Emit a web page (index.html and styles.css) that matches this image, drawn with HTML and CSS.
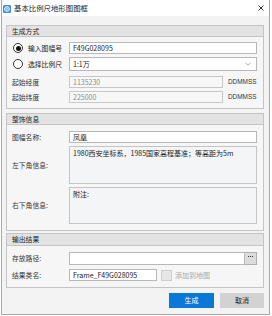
FILE: index.html
```html
<!DOCTYPE html>
<html lang="zh">
<head>
<meta charset="utf-8">
<title>基本比例尺地形图图框</title>
<link rel="stylesheet" href="styles.css">
</head>
<body>
<div class="win">
  <div class="titlebar">
    <svg class="appicon" width="8" height="8" viewBox="0 0 8 8">
      <rect x="0" y="0" width="8" height="8" rx="1.5" fill="#3b8fd9"/>
      <circle cx="4" cy="4" r="2.4" fill="none" stroke="#fff" stroke-width="0.9"/>
      <path d="M1.6 4h4.8M4 1.6v4.8" stroke="#fff" stroke-width="0.6"/>
    </svg>
    <span class="title">基本比例尺地形图图框</span>
    <svg class="close" width="6" height="6" viewBox="0 0 6 6">
      <path d="M0.5 0.5L5.5 5.5M5.5 0.5L0.5 5.5" stroke="#333" stroke-width="1"/>
    </svg>
  </div>
  <div class="content">
    <section class="group g1">
      <div class="ghead">生成方式</div>
      <div class="gbody">
        <div class="row r1">
          <div class="radio-label"><span class="radio checked"></span>输入图幅号</div>
          <div class="field">F49G028095</div>
        </div>
        <div class="row r2">
          <div class="radio-label"><span class="radio"></span>选择比例尺</div>
          <div class="field select">
            <span>1:1万</span>
            <svg class="chev" width="6" height="4" viewBox="0 0 6 4"><path d="M0.5 0.8L3 3.2L5.5 0.8" fill="none" stroke="#999" stroke-width="0.8"/></svg>
          </div>
        </div>
        <div class="row r3">
          <div class="label">起始经度</div>
          <div class="unit-row">
            <div class="field disabled short">1135230</div>
            <span class="unit">DDMMSS</span>
          </div>
        </div>
        <div class="row r4">
          <div class="label">起始纬度</div>
          <div class="unit-row">
            <div class="field disabled short">225000</div>
            <span class="unit">DDMMSS</span>
          </div>
        </div>
      </div>
    </section>

    <section class="group g2">
      <div class="ghead">整饰信息</div>
      <div class="gbody">
        <div class="row r5">
          <div class="label">图幅名称:</div>
          <div class="field">凤凰</div>
        </div>
        <div class="row r6">
          <div class="label">左下角信息:</div>
          <div class="area">1980西安坐标系，1985国家高程基准；等高距为5m</div>
        </div>
        <div class="row r7">
          <div class="label">右下角信息:</div>
          <div class="area a2">附注:</div>
        </div>
      </div>
    </section>

    <section class="group g3">
      <div class="ghead">输出结果</div>
      <div class="gbody">
        <div class="row r8">
          <div class="label">存放路径:</div>
          <div class="path-row">
            <div class="field path"></div>
            <div class="browse"><span class="dots"></span></div>
          </div>
        </div>
        <div class="row r9">
          <div class="label">结果类名:</div>
          <div class="name-row">
            <div class="field name">Frame_F49G028095</div>
            <span class="check"></span>
            <span class="check-label">添加到地图</span>
          </div>
        </div>
      </div>
    </section>

    <div class="buttons">
      <div class="btn primary">生成</div>
      <div class="btn cancel">取消</div>
    </div>
  </div>
</div>
</body>
</html>
```

FILE: styles.css
```css
* { box-sizing: border-box; }

html, body {
  margin: 0;
  padding: 0;
}

body {
  width: 272px;
  height: 316px;
  background: #ffffff;
  font-family: "Noto Sans CJK SC", "Noto Sans", sans-serif;
  font-size: 7px;
  line-height: 1;
  color: #2a2a2a;
  overflow: hidden;
}

.win {
  margin-left: 1px;
  width: 269px;
  height: 315px;
  border-left: 1px solid #a8a8a8;
  border-right: 1px solid #a8a8a8;
  border-bottom: 1px solid #a8a8a8;
  background: #f3f3f3;
  display: flex;
  flex-direction: column;
}

.titlebar {
  height: 16px;
  background: #ffffff;
  display: flex;
  align-items: center;
  padding-left: 1px;
  padding-right: 5px;
}

.appicon {
  display: block;
  margin-top: 1px;
}

.title {
  margin-left: 3px;
  font-size: 7.4px;
  color: #222;
}

.close {
  display: block;
  margin-left: auto;
  margin-top: -1px;
}

.content {
  flex: 1;
  padding: 9px 5px 0 4px;
  display: flex;
  flex-direction: column;
}

.group {
  border: 1px solid #c4c4c4;
  background: #f6f6f6;
}

.g2 { margin-top: 4px; }
.g3 { margin-top: 2px; }

.ghead {
  height: 11px;
  background: #e3e3e3;
  border-bottom: 1px solid #c4c4c4;
  padding-left: 5px;
  display: flex;
  align-items: center;
  font-size: 6.8px;
  color: #222;
}

.g3 .ghead { height: 12px; }

.gbody {
  padding: 5px 6px 5px 5px;
  display: flex;
  flex-direction: column;
}

.g2 .gbody { padding-top: 6px; padding-bottom: 6px; }
.g3 .gbody { padding-top: 6px; padding-bottom: 6px; }

.row {
  display: grid;
  grid-template-columns: 57px 188px;
  align-items: center;
}

.r2 { margin-top: 3px; }
.r3 { margin-top: 5px; }
.r4 { margin-top: 3px; }
.r6 { margin-top: 3px; }
.r7 { margin-top: 3px; }
.r9 { margin-top: 4px; }

.label {
  color: #333;
  font-size: 6.8px;
}

.radio-label {
  display: flex;
  align-items: center;
  color: #222;
  font-size: 6.8px;
}

.radio {
  width: 10px;
  height: 10px;
  margin-left: 1px;
  margin-right: 5px;
  border: 1px solid #333;
  border-radius: 50%;
  background: #fff;
  display: flex;
  align-items: center;
  justify-content: center;
}

.radio.checked::after {
  content: "";
  width: 5px;
  height: 5px;
  border-radius: 50%;
  background: #111;
}

.field {
  height: 12px;
  background: #ffffff;
  border: 1px solid #b8b8b8;
  padding-left: 3px;
  display: flex;
  align-items: center;
  color: #222;
  font-size: 7px;
  white-space: nowrap;
  overflow: hidden;
}

.select {
  height: 14px;
  justify-content: space-between;
  padding-right: 5px;
}

.chev { display: block; }

.unit-row,
.path-row,
.name-row {
  display: flex;
  align-items: center;
}

.short {
  width: 154px;
}

.disabled {
  background: #f7f7f7;
  border-color: #c8c8c8;
  color: #8c8c8c;
}

.unit {
  margin-left: 5px;
  font-size: 6.4px;
  color: #333;
  font-family: "Liberation Sans", "Noto Sans", sans-serif;
}

.area {
  height: 38px;
  background: #f4f5f7;
  border: 1px solid #c4c4c4;
  padding: 3px 3px;
  color: #222;
  font-size: 7px;
  white-space: nowrap;
  overflow: hidden;
}

.a2 { height: 37px; }

.path {
  width: 176px;
  height: 13px;
}

.browse {
  width: 12px;
  height: 13px;
  background: #dcdcdc;
  border: 1px solid #b0b0b0;
  border-left: none;
  display: flex;
  justify-content: center;
  padding-top: 3px;
}

.dots {
  width: 5px;
  height: 1px;
  background: linear-gradient(90deg, #333 0 1px, transparent 1px 2px, #333 2px 3px, transparent 3px 4px, #333 4px 5px);
}

.name {
  width: 88px;
}

.check {
  width: 11px;
  height: 11px;
  margin-left: 4px;
  background: #e6e6e6;
  border: 1px solid #cfcfcf;
}

.check-label {
  margin-left: 3px;
  color: #a8a8a8;
  font-size: 7px;
}

.buttons {
  margin-top: 5px;
  display: flex;
  justify-content: flex-end;
  gap: 6px;
}

.btn {
  height: 15px;
  display: flex;
  align-items: center;
  justify-content: center;
  font-size: 7px;
}

.primary {
  width: 45px;
  background: #0a78d8;
  color: #ffffff;
}

.cancel {
  width: 44px;
  background: #d2d2d2;
  color: #222;
}
```
